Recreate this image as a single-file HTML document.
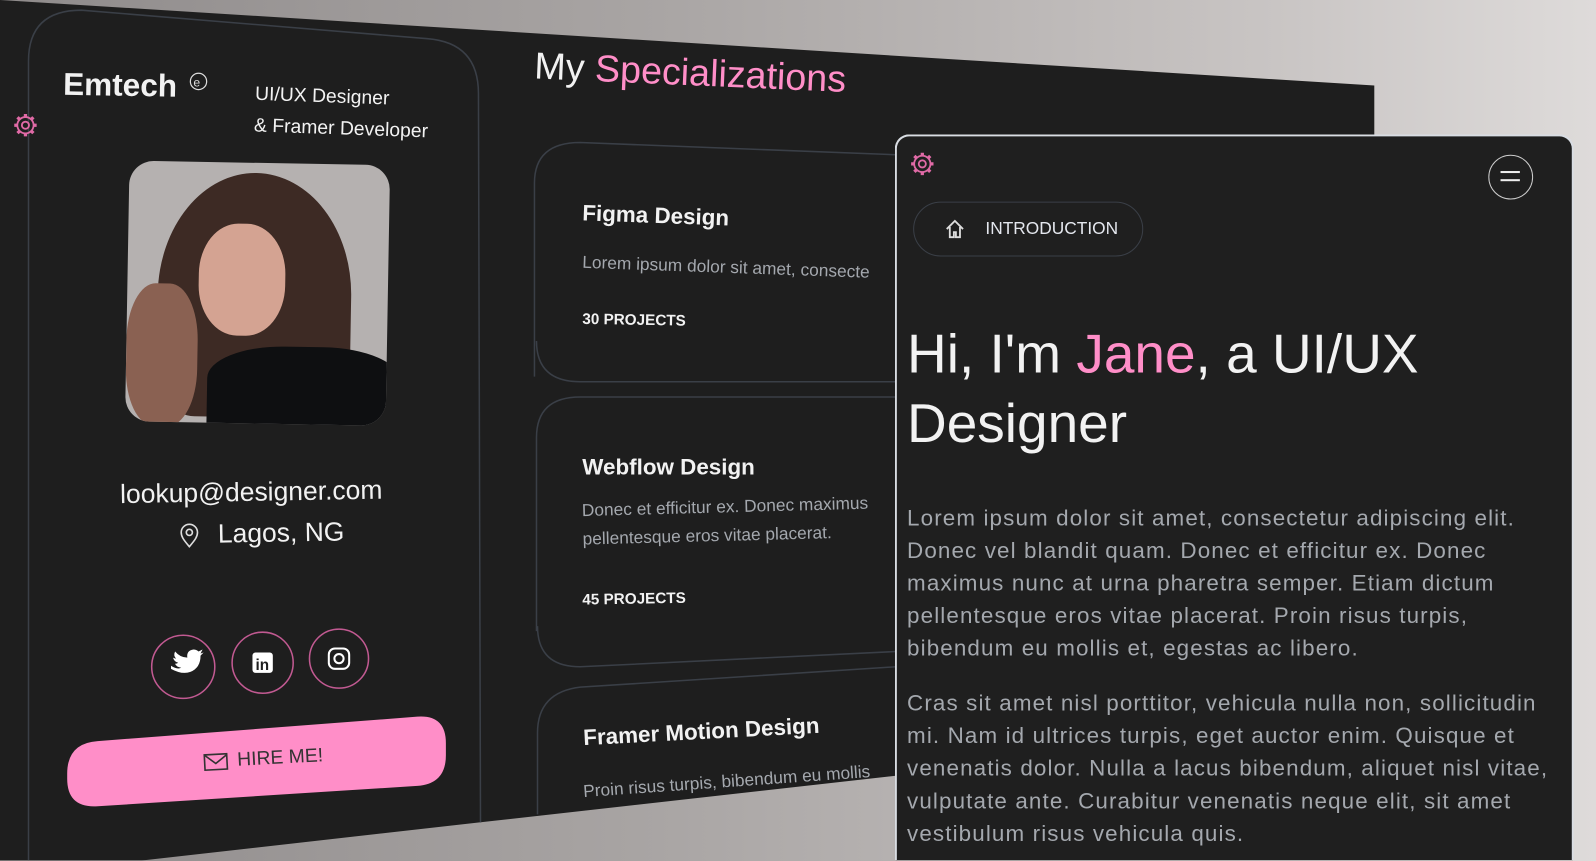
<!DOCTYPE html>
<html style="width:1596px;height:861px;overflow:hidden"><head><meta charset="utf-8"><style>
*{margin:0;padding:0;box-sizing:border-box}
body{width:1596px;height:861px;overflow:hidden;position:relative;font-family:"Liberation Sans",sans-serif;background:linear-gradient(90deg,#8f8b8b 0%,#a8a4a3 40%,#c9c5c4 80%,#dedbda 100%)}
#s{position:absolute;left:0;top:0;width:1568px;height:845px;overflow:hidden;transform:scale(1.018);transform-origin:0 0}
.a{position:absolute}
.w{color:#f2f2f2}
.pk{color:#ff8ec8}
.g{color:#a4a8ae}
</style></head><body><div id="s">
<svg class="a" style="left:0;top:0" width="1568" height="845">
<defs><g id="gear" fill="none" stroke="#e06aa6"><circle r="3.5" stroke-width="1.8"/><circle r="8" stroke-width="1.8"/><g stroke-width="3.2"><path d="M0,-8V-11M0,8V11M-8,0H-11M8,0H11M5.7,5.7L7.8,7.8M-5.7,-5.7L-7.8,-7.8M5.7,-5.7L7.8,-7.8M-5.7,5.7L-7.8,7.8"/></g></g></defs>
<polygon points="0,0 1350,84 1350,760 880,762 470,808 0,861" fill="#1e1e1e"/>
<path d="M28,845 L28,60 Q28,10 80,10 L420,38 Q470,42 470,92 L472,808" fill="none" stroke="#3a3f47" stroke-width="1.5"/>
<path d="M525,370 L525,180 Q525,140 570,140 L880,152" fill="none" stroke="#3a3f47" stroke-width="1.5"/>
<path d="M880,375 L570,375 Q527,375 527,335" fill="none" stroke="#3a3f47" stroke-width="1.5"/>
<path d="M527,620 L527,430 Q527,390 570,390 L880,390" fill="none" stroke="#3a3f47" stroke-width="1.5"/>
<path d="M880,640 L570,655 Q528,655 528,615" fill="none" stroke="#3a3f47" stroke-width="1.5"/>
<path d="M528,800 L528,720 Q528,680 570,675 L880,655" fill="none" stroke="#3a3f47" stroke-width="1.5"/>
<use href="#gear" x="25" y="123"/>
<g fill="none" stroke="#c25a92" stroke-width="1.5"><ellipse cx="180" cy="655" rx="31" ry="31"/><ellipse cx="258" cy="651" rx="30" ry="30"/><ellipse cx="333" cy="647" rx="29" ry="29"/></g>
<path d="M168,654 q6,4 10,2 q-5,-1 -6,-4 q2,0 3,-1 q-4,-1 -5,-5 q2,1 3,1 q-3,-3 -1,-7 q5,6 12,6 q-1,-7 6,-8 q3,0 5,2 l4,-2 l-2,4 l3,-1 l-3,3 q0,12 -10,16 q-8,3 -19,-3z" fill="#fff"/>
<rect x="248" y="641" width="20" height="20" rx="3" fill="#fff"/>
<text x="251" y="658" font-family="Liberation Sans" font-weight="bold" font-size="15" fill="#1e1e1e">in</text>
<rect x="323" y="637" width="20" height="20" rx="6" fill="none" stroke="#fff" stroke-width="2"/><circle cx="333" cy="647" r="4.5" fill="none" stroke="#fff" stroke-width="2"/>
<path d="M66,760 Q66,730 96,728 L410,704 Q438,702 438,730 L438,742 Q438,770 410,772 L96,792 Q66,794 66,765Z" fill="#ff8ec8"/>
<g fill="none" stroke="#333" stroke-width="1.6"><rect x="201" y="741" width="22" height="15" transform="rotate(-3 212 748)"/><path d="M201,742 l11,8 l11,-9"/></g>
<path d="M186,537 c-6,-7 -8,-10 -8,-14 a8,8 0 0 1 16,0 c0,4 -2,7 -8,14z" fill="none" stroke="#ddd" stroke-width="1.6"/><circle cx="186" cy="523" r="3" fill="none" stroke="#ddd" stroke-width="1.6"/>
<circle cx="195" cy="80" r="8" fill="none" stroke="#ddd" stroke-width="1.2"/><text x="190" y="85" font-size="12" fill="#ddd">e</text>
</svg>
<div class="a w" style="left:62px;top:66px;font-size:31px;font-weight:bold;transform:rotate(1deg)">Emtech</div>
<div class="a w" style="left:250px;top:80px;font-size:19px;line-height:31px;transform:rotate(2deg)">UI/UX Designer<br>&amp; Framer Developer</div>
<div class="a" style="left:125px;top:160px;width:256px;height:256px;border-radius:24px;overflow:hidden;background:#b5b1b0;transform:rotate(1deg)">
<div class="a" style="left:30px;top:10px;width:190px;height:240px;border-radius:50% 50% 20% 20%;background:#3d2a24"></div>
<div class="a" style="left:70px;top:60px;width:85px;height:110px;border-radius:45%;background:#d4a392"></div>
<div class="a" style="left:80px;top:180px;width:190px;height:80px;border-radius:40% 40% 0 0;background:#0e0f11"></div>
<div class="a" style="left:0;top:120px;width:70px;height:140px;border-radius:40%;background:#8a6152"></div>
</div>
<div class="a w" style="left:118px;top:468px;font-size:26px;transform:rotate(-1deg)">lookup@designer.com</div>
<div class="a w" style="left:214px;top:508px;font-size:26px;transform:rotate(-1deg)">Lagos, NG</div>
<div class="a" style="left:233px;top:734px;font-size:19px;color:#333;transform:rotate(-3deg)">HIRE ME!</div>
<div class="a" style="left:525px;top:44px;font-size:37px;transform:rotate(2.5deg);transform-origin:left"><span class="w">My </span><span class="pk">Specializations</span></div>
<div class="a w" style="left:572px;top:199px;font-size:22px;font-weight:bold;transform:rotate(2deg)">Figma Design</div>
<div class="a g" style="left:572px;top:248px;font-size:17px;white-space:nowrap;transform:rotate(2deg);transform-origin:left">Lorem ipsum dolor sit amet, consecte</div>
<div class="a w" style="left:572px;top:306px;font-size:15px;font-weight:bold;transform:rotate(1deg)">30 PROJECTS</div>
<div class="a w" style="left:572px;top:446px;font-size:22px;font-weight:bold">Webflow Design</div>
<div class="a g" style="left:572px;top:488px;font-size:17px;line-height:28px;white-space:nowrap;transform:rotate(-1.5deg);transform-origin:left">Donec et efficitur ex. Donec maximus<br>pellentesque eros vitae placerat.</div>
<div class="a w" style="left:572px;top:580px;font-size:15px;font-weight:bold;transform:rotate(-1deg)">45 PROJECTS</div>
<div class="a w" style="left:573px;top:712px;font-size:22px;font-weight:bold;transform:rotate(-3deg);transform-origin:left">Framer Motion Design</div>
<div class="a g" style="left:573px;top:768px;font-size:17px;white-space:nowrap;transform:rotate(-4deg);transform-origin:left">Proin risus turpis, bibendum eu mollis</div>
<div class="a" style="left:879px;top:132px;width:667px;height:713px;background:#1f1f1f;border:2px solid #d9dde3;border-bottom:none;border-radius:14px 14px 0 0;overflow:hidden">
<svg class="a" style="left:10px;top:12px" width="30" height="30"><use href="#gear" x="15" y="15"/></svg>
<div class="a" style="left:581px;top:18px;width:44px;height:44px;border:1.5px solid #ccc;border-radius:50%"><div class="a" style="left:11px;top:15px;width:19px;height:2px;background:#eee"></div><div class="a" style="left:11px;top:23px;width:19px;height:2px;background:#eee"></div></div>
<div class="a" style="left:16px;top:64px;width:226px;height:54px;border:1.5px solid #3a3f47;border-radius:27px"></div>
<svg class="a" style="left:46px;top:80px" width="22" height="22"><path d="M3,11 L11,3 L19,11 M6,9 V19 H10 V14 H12 V19 H16 V9" fill="none" stroke="#ddd" stroke-width="1.8"/></svg>
<div class="a" style="left:87px;top:81px;font-size:17px;color:#e4e7ee">INTRODUCTION</div>
<div class="a w" style="left:10px;top:180px;font-size:54px;line-height:68px;white-space:nowrap">Hi, I'm <span class="pk">Jane</span>, a UI/UX<br>Designer</div>
<div class="a g" style="left:10px;top:359px;width:640px;font-size:22px;letter-spacing:1.1px;line-height:32px">Lorem ipsum dolor sit amet, consectetur adipiscing elit. Donec vel blandit quam. Donec et efficitur ex. Donec maximus nunc at urna pharetra semper. Etiam dictum pellentesque eros vitae placerat. Proin risus turpis, bibendum eu mollis et, egestas ac libero.</div>
<div class="a g" style="left:10px;top:541px;width:640px;font-size:22px;letter-spacing:1.1px;line-height:32px">Cras sit amet nisl porttitor, vehicula nulla non, sollicitudin mi. Nam id ultrices turpis, eget auctor enim. Quisque et venenatis dolor. Nulla a lacus bibendum, aliquet nisl vitae, vulputate ante. Curabitur venenatis neque elit, sit amet vestibulum risus vehicula quis.</div>
</div>
</div></body></html>
